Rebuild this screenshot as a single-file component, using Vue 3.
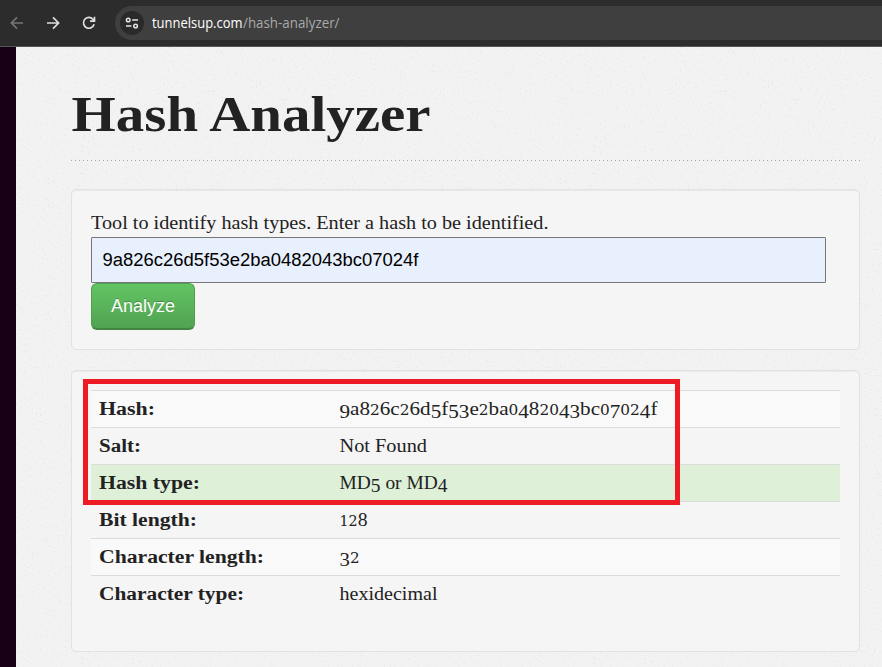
<script setup>
const hash = '9a826c26d5f53e2ba0482043bc07024f'
const rows = [
  { label: 'Hash:', lw: 56, value: hash, vw: 318, kind: 'odd' },
  { label: 'Salt:', lw: 42, value: 'Not Found', vw: 87.5, kind: '' },
  { label: 'Hash type:', lw: 101, value: 'MD5 or MD4', vw: 108, kind: 'match' },
  { label: 'Bit length:', lw: 98, value: '128', vw: 28, kind: '' },
  { label: 'Character length:', lw: 165, value: '32', vw: 20, kind: 'odd' },
  { label: 'Character type:', lw: 145, value: 'hexidecimal', vw: 98, kind: '' },
]

// Old-style figures: 0-2 sit at x-height, 3 4 5 7 9 drop below the baseline.
function figures(value) {
  let shift = 0
  return [...value].map((ch) => {
    const drop = '34579'.includes(ch) ? 3 : 0
    const dy = drop - shift
    shift = drop
    return { ch, dy, small: '012'.includes(ch) }
  })
}
</script>

<template>
  <div class="window">
    <header class="toolbar">
      <svg class="nav dim" viewBox="0 0 16 16"><path d="M14 8H3M8 2.4L2.4 8L8 13.6" /></svg>
      <svg class="nav" viewBox="0 0 16 16"><path d="M2 8H13M8 2.4L13.6 8L8 13.6" /></svg>
      <svg class="nav" viewBox="0 0 16 16"><path d="M13.1 9.2A5.4 5.4 0 1 1 11.9 4.2L13.3 5.7M13.5 1.8V6.2H9" /></svg>
      <div class="address">
        <span class="site">
          <svg viewBox="0 0 14 14"><circle cx="3.2" cy="4" r="1.8" /><path d="M7.2 4H13M1 10H6.4" /><circle cx="10.6" cy="10" r="1.8" /></svg>
        </span>
        <svg class="url" width="220" height="24">
          <text class="host" x="0" y="17" textLength="90.5" lengthAdjust="spacingAndGlyphs">tunnelsup.com</text>
          <text class="path" x="91" y="17" textLength="96.5" lengthAdjust="spacingAndGlyphs">/hash-analyzer/</text>
        </svg>
      </div>
    </header>
    <div class="page">
      <svg class="grain" width="866" height="620">
        <filter id="specks" x="0" y="0" width="100%" height="100%">
          <feTurbulence type="fractalNoise" baseFrequency="0.5" numOctaves="2" seed="4" />
          <feColorMatrix values="0 0 0 0 0.7  0 0 0 0 0.7  0 0 0 0 0.7  2.4 0 0 0 -1.48" />
        </filter>
        <rect width="866" height="620" filter="url(#specks)" />
      </svg>
      <main>
        <h1>
          <svg width="362" height="60"><text x="0.5" y="44" textLength="359" lengthAdjust="spacingAndGlyphs">Hash Analyzer</text></svg>
        </h1>
        <div class="rule"></div>
        <section class="well form">
          <svg class="line" width="470" height="27"><text x="0" y="19" textLength="457.5" lengthAdjust="spacingAndGlyphs">Tool to identify hash types. Enter a hash to be identified.</text></svg>
          <div class="field">
            <svg width="330" height="30"><text x="0.5" y="21" textLength="316" lengthAdjust="spacingAndGlyphs">{{ hash }}</text></svg>
          </div>
          <button>Analyze</button>
        </section>
        <section class="well result">
          <div v-for="r in rows" :key="r.label" class="row" :class="r.kind">
            <svg class="label" width="240" height="36"><text x="0" y="24" :textLength="r.lw" lengthAdjust="spacingAndGlyphs">{{ r.label }}</text></svg>
            <svg width="330" height="36"><text x="0.5" y="24" :textLength="r.vw" lengthAdjust="spacingAndGlyphs"><tspan v-for="(f, i) in figures(r.value)" :key="i" :dy="f.dy" :class="{ small: f.small }">{{ f.ch }}</tspan></text></svg>
          </div>
          <div class="highlight"></div>
        </section>
      </main>
    </div>
  </div>
</template>

<style>
body {
  margin: 0;
  overflow: hidden;
}
</style>

<style scoped>
.window {
  width: 882px;
  height: 667px;
  overflow: hidden;
  display: flex;
  flex-direction: column;
  color: #222;
  font-family: Georgia, "Liberation Serif", serif;
}
svg {
  display: block;
  flex: none;
}
.toolbar {
  box-sizing: border-box;
  height: 47px;
  flex: none;
  display: flex;
  align-items: center;
  padding-left: 9px;
  gap: 20px;
  background: #2c2c2c;
  border-bottom: 1px solid #565656;
}
.nav {
  width: 16px;
  height: 16px;
  fill: none;
  stroke: #dedede;
  stroke-width: 1.7;
}
.dim {
  stroke: #757575;
}
.address {
  box-sizing: border-box;
  height: 34px;
  flex: 1;
  margin-left: -2px;
  padding-left: 5px;
  display: flex;
  align-items: center;
  gap: 8px;
  background: #3f3f3f;
  border-radius: 17px 0 0 17px;
}
.site {
  width: 24px;
  height: 24px;
  border-radius: 50%;
  background: #2a2a2a;
  display: grid;
  place-items: center;
}
.site svg {
  width: 14px;
  height: 14px;
  fill: none;
  stroke: #e3e3e3;
  stroke-width: 1.5;
}
.url {
  font: 14px "Open Sans", "Noto Sans", sans-serif;
}
.page {
  position: relative;
  box-sizing: border-box;
  height: 620px;
  border-left: 16px solid #180016;
  background: #f2f2f2;
}
.grain {
  position: absolute;
  left: 0;
  top: 0;
}
main {
  position: relative;
  box-sizing: border-box;
  width: 844px;
  padding: 40px 0 0 55px;
}
h1 {
  margin: 0;
  height: 73px;
  font-size: 50.5px;
  font-weight: bold;
}
text {
  fill: #222;
}
.small {
  font-family: "DejaVu Serif", serif;
  font-size: 14.2px;
}
.toolbar .host {
  fill: #fff;
}
.toolbar .path {
  fill: #aaa;
}
.rule {
  height: 1px;
  background: repeating-linear-gradient(90deg, #a4a4a4 0 1px, transparent 1px 4px);
}
.well {
  box-sizing: border-box;
  width: 789px;
  border: 1px solid #e2e2e2;
  border-radius: 5px;
  background: #f5f5f5;
  box-shadow: inset 0 1px 1px rgba(0, 0, 0, 0.05);
  font-size: 19.6px;
}
.form {
  height: 161px;
  margin-top: 28px;
  padding: 20px 19px;
}
.field {
  box-sizing: border-box;
  width: 735px;
  height: 46px;
  display: flex;
  align-items: center;
  padding-left: 10px;
  border: 1px solid #767676;
  border-radius: 1px;
  background: #e8f0fe;
  font: 18px "Liberation Sans", Arial, sans-serif;
}
.field text {
  fill: #000;
}
button {
  display: block;
  width: 104px;
  height: 47px;
  padding: 0;
  border: 1px solid #4f9e4f;
  border-bottom: 2px solid #428442;
  border-radius: 6px;
  background: linear-gradient(#62c462, #51a351);
  color: #fff;
  font: 18px "Liberation Sans", Arial, sans-serif;
  text-shadow: 0 -1px 0 rgba(0, 0, 0, 0.25);
}
.result {
  position: relative;
  height: 282px;
  margin-top: 20px;
  padding: 19px;
}
.row {
  box-sizing: border-box;
  width: 749px;
  height: 37px;
  display: flex;
  padding-left: 8px;
  border-top: 1px solid #dcdcdc;
}
.label {
  font-weight: bold;
}
.odd {
  background: #f9f9f9;
}
.match {
  background: #dff0d8;
}
.highlight {
  position: absolute;
  box-sizing: border-box;
  left: 11px;
  top: 8px;
  width: 597px;
  height: 126px;
  border: 5px solid #ed1c24;
}
</style>
